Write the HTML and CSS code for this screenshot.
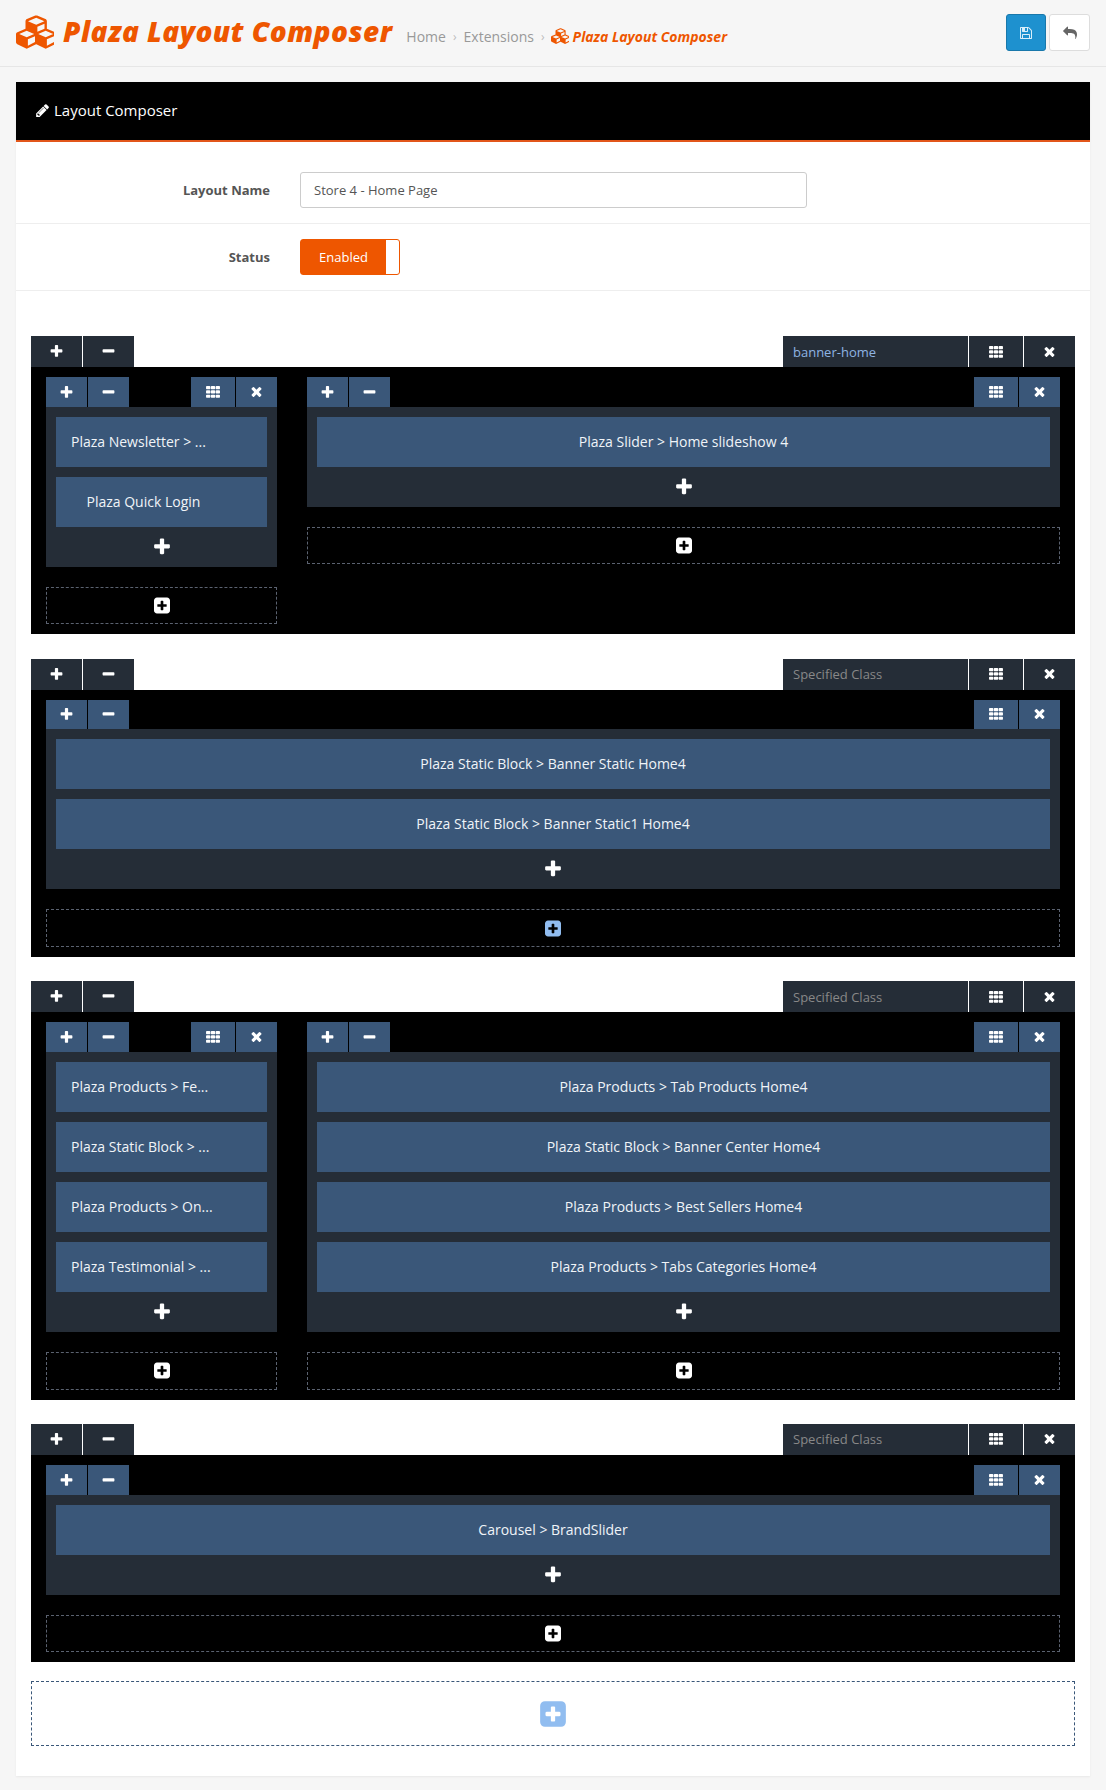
FILE: index.html
```html
<!DOCTYPE html>
<html lang="en">
<head>
<meta charset="utf-8">
<title>Plaza Layout Composer</title>
<link rel="stylesheet" href="styles.css">
</head>
<body>
<svg class="defs" width="0" height="0" aria-hidden="true">
  <symbol id="i-plus" viewBox="0 0 1408 1792"><path d="M1408 736v192q0 40-28 68t-68 28h-416v416q0 40-28 68t-68 28h-192q-40 0-68-28t-28-68v-416h-416q-40 0-68-28t-28-68v-192q0-40 28-68t68-28h416v-416q0-40 28-68t68-28h192q40 0 68 28t28 68v416h416q40 0 68 28t28 68z"/></symbol>
  <symbol id="i-minus" viewBox="0 0 1408 1792"><path d="M1408 736v192q0 40-28 68t-68 28h-1216q-40 0-68-28t-28-68v-192q0-40 28-68t68-28h1216q40 0 68 28t28 68z"/></symbol>
  <symbol id="i-times" viewBox="0 0 1188 1792"><path d="M1188 1188q0 40-28 68l-136 136q-28 28-68 28t-68-28l-294-294-294 294q-28 28-68 28t-68-28l-136-136q-28-28-28-68t28-68l294-294-294-294q-28-28-28-68t28-68l136-136q28-28 68-28t68 28l294 294 294-294q28-28 68-28t68 28l136 136q28 28 28 68t-28 68l-294 294 294 294q28 28 28 68z"/></symbol>
  <symbol id="i-square" viewBox="0 0 1536 1792"><path d="M1216 960v-128q0-26-19-45t-45-19h-256v-256q0-26-19-45t-45-19h-128q-26 0-45 19t-19 45v256h-256q-26 0-45 19t-19 45v128q0 26 19 45t45 19h256v256q0 26 19 45t45 19h128q26 0 45-19t19-45v-256h256q26 0 45-19t19-45zm320-544v960q0 119-84.500 203.500t-203.500 84.500h-960q-119 0-203.500-84.500t-84.500-203.500v-960q0-119 84.500-203.500t203.500-84.500h960q119 0 203.500 84.500t84.500 203.500z"/></symbol>
  <symbol id="i-th" viewBox="0 0 1664 1792"><path d="M512 1248v192q0 40-28 68t-68 28h-320q-40 0-68-28t-28-68v-192q0-40 28-68t68-28h320q40 0 68 28t28 68zm0-512v192q0 40-28 68t-68 28h-320q-40 0-68-28t-28-68v-192q0-40 28-68t68-28h320q40 0 68 28t28 68zm576 512v192q0 40-28 68t-68 28h-320q-40 0-68-28t-28-68v-192q0-40 28-68t68-28h320q40 0 68 28t28 68zm-576-1024v192q0 40-28 68t-68 28h-320q-40 0-68-28t-28-68v-192q0-40 28-68t68-28h320q40 0 68 28t28 68zm576 512v192q0 40-28 68t-68 28h-320q-40 0-68-28t-28-68v-192q0-40 28-68t68-28h320q40 0 68 28t28 68zm576 512v192q0 40-28 68t-68 28h-320q-40 0-68-28t-28-68v-192q0-40 28-68t68-28h320q40 0 68 28t28 68zm-576-1024v192q0 40-28 68t-68 28h-320q-40 0-68-28t-28-68v-192q0-40 28-68t68-28h320q40 0 68 28t28 68zm576 512v192q0 40-28 68t-68 28h-320q-40 0-68-28t-28-68v-192q0-40 28-68t68-28h320q40 0 68 28t28 68zm0-512v192q0 40-28 68t-68 28h-320q-40 0-68-28t-28-68v-192q0-40 28-68t68-28h320q40 0 68 28t28 68z"/></symbol>
  <symbol id="i-save" viewBox="0 0 1536 1792"><path d="M384 1536h768v-384h-768v384zm896 0h128v-896q0-14-10-38.500t-20-34.500l-281-281q-10-10-34-20t-39-10v416q0 40-28 68t-68 28h-576q-40 0-68-28t-28-68v-416h-128v1280h128v-416q0-40 28-68t68-28h832q40 0 68 28t28 68v416zm-384-928v-320q0-13-9.500-22.500t-22.500-9.500h-192q-13 0-22.500 9.500t-9.500 22.500v320q0 13 9.500 22.500t22.500 9.500h192q13 0 22.500-9.500t9.500-22.500zm640 32v928q0 40-28 68t-68 28h-1344q-40 0-68-28t-28-68v-1344q0-40 28-68t68-28h928q40 0 88 20t76 48l280 280q28 28 48 76t20 88z"/></symbol>
  <symbol id="i-reply" viewBox="0 0 1792 1792"><path d="M1792 1120q0 166-127 451-3 7-10.500 24t-13.500 30-13 22q-12 17-28 17-15 0-23.500-10t-8.500-25q0-9 2.500-26.500t2.500-23.500q5-68 5-123 0-101-17.500-181t-48.500-138.500-80-101-105.500-69.500-133-42.500-154-21.500-175.500-6h-224v256q0 26-19 45t-45 19-45-19l-512-512q-19-19-19-45t19-45l512-512q19-19 45-19t45 19 19 45v256h224q713 0 875 403 53 134 53 333z"/></symbol>
  <symbol id="i-pencil" viewBox="0 0 1515 1792"><path d="M363 1536l91-91-235-235-91 91v107h128v128h107zm523-928q0-22-22-22-10 0-17 7l-542 542q-7 7-7 17 0 22 22 22 10 0 17-7l542-542q7-7 7-17zm-54-192l416 416-832 832h-416v-416zm683 96q0 53-37 90l-166 166-416-416 166-165q36-38 90-38 53 0 91 38l235 234q37 39 37 91z"/></symbol>
  <symbol id="i-cubes" viewBox="0 0 2048 1792"><path d="M640 1632l384-192v-314l-384 164v342zm-64-454l404-173-404-173-404 173zm1088 454l384-192v-314l-384 164v342zm-64-454l404-173-404-173-404 173zm-448-293l384-165v-266l-384 164v267zm-64-379l441-189-441-189-441 189zm1088 518v416q0 36-19 67t-52 47l-448 224q-25 14-57 14t-57-14l-448-224q-4-2-7-4-2 2-7 4l-448 224q-25 14-57 14t-57-14l-448-224q-33-16-52-47t-19-67v-416q0-38 21.500-70t56.500-48l434-186v-400q0-38 21.500-70t56.500-48l448-192q23-10 50-10t50 10l448 192q35 16 56.500 48t21.500 70v400l434 186q36 16 57 48t21 70z"/></symbol>
</svg>

<header class="top">
  <div class="brand">
    <svg class="brand-icon"><use href="#i-cubes"/></svg>
    <h1 class="brand-title">Plaza Layout Composer</h1>
    <nav class="crumbs">
      <a class="crumb">Home</a><span class="sep">›</span>
      <a class="crumb">Extensions</a><span class="sep">›</span>
      <svg class="crumb-icon"><use href="#i-cubes"/></svg>
      <a class="crumb-now">Plaza Layout Composer</a>
    </nav>
  </div>
  <div class="actions">
    <button class="btn btn-save"><svg class="btn-icon"><use href="#i-save"/></svg></button>
    <button class="btn btn-back"><svg class="btn-icon"><use href="#i-reply"/></svg></button>
  </div>
</header>

<main class="panel">
  <div class="panel-head"><svg class="pencil"><use href="#i-pencil"/></svg><span>Layout Composer</span></div>
  <div class="panel-body">
    <div class="form-row form-row-name">
      <label class="form-label">Layout Name</label>
      <div class="input">Store 4 - Home Page</div>
    </div>
    <div class="form-row form-row-status">
      <label class="form-label">Status</label>
      <div class="toggle"><span class="toggle-on">Enabled</span><span class="toggle-knob"></span></div>
    </div>

    <div class="composer">
      <section class="row">
        <div class="row-tabs">
          <div class="tab tab-add"><svg class="ic"><use href="#i-plus"/></svg></div>
          <div class="tab tab-add"><svg class="ic"><use href="#i-minus"/></svg></div>
          <div class="tab tab-class tab-class-set">banner-home</div>
          <div class="tab tab-grid"><svg class="ic"><use href="#i-th"/></svg></div>
          <div class="tab tab-x"><svg class="ic"><use href="#i-times"/></svg></div>
        </div>
        <div class="row-body row-split">
          <div class="col col-side">
            <div class="col-tabs">
              <div class="ctab"><svg class="ic"><use href="#i-plus"/></svg></div>
              <div class="ctab"><svg class="ic"><use href="#i-minus"/></svg></div>
              <div class="ctab ctab-grid"><svg class="ic"><use href="#i-th"/></svg></div>
              <div class="ctab ctab-x"><svg class="ic"><use href="#i-times"/></svg></div>
            </div>
            <div class="col-body">
              <div class="module module-left">Plaza Newsletter &gt; ...</div>
              <div class="module module-left module-indent">Plaza Quick Login</div>
              <div class="col-add"><svg class="ic-add"><use href="#i-plus"/></svg></div>
            </div>
            <div class="drop"><svg class="ic-drop"><use href="#i-square"/></svg></div>
          </div>
          <div class="col col-main">
            <div class="col-tabs">
              <div class="ctab"><svg class="ic"><use href="#i-plus"/></svg></div>
              <div class="ctab"><svg class="ic"><use href="#i-minus"/></svg></div>
              <div class="ctab ctab-grid"><svg class="ic"><use href="#i-th"/></svg></div>
              <div class="ctab ctab-x"><svg class="ic"><use href="#i-times"/></svg></div>
            </div>
            <div class="col-body">
              <div class="module">Plaza Slider &gt; Home slideshow 4</div>
              <div class="col-add"><svg class="ic-add"><use href="#i-plus"/></svg></div>
            </div>
            <div class="drop"><svg class="ic-drop"><use href="#i-square"/></svg></div>
          </div>
        </div>
      </section>

      <section class="row">
        <div class="row-tabs">
          <div class="tab tab-add"><svg class="ic"><use href="#i-plus"/></svg></div>
          <div class="tab tab-add"><svg class="ic"><use href="#i-minus"/></svg></div>
          <div class="tab tab-class">Specified Class</div>
          <div class="tab tab-grid"><svg class="ic"><use href="#i-th"/></svg></div>
          <div class="tab tab-x"><svg class="ic"><use href="#i-times"/></svg></div>
        </div>
        <div class="row-body">
          <div class="col">
            <div class="col-tabs">
              <div class="ctab"><svg class="ic"><use href="#i-plus"/></svg></div>
              <div class="ctab"><svg class="ic"><use href="#i-minus"/></svg></div>
              <div class="ctab ctab-grid"><svg class="ic"><use href="#i-th"/></svg></div>
              <div class="ctab ctab-x"><svg class="ic"><use href="#i-times"/></svg></div>
            </div>
            <div class="col-body">
              <div class="module">Plaza Static Block &gt; Banner Static Home4</div>
              <div class="module">Plaza Static Block &gt; Banner Static1 Home4</div>
              <div class="col-add"><svg class="ic-add"><use href="#i-plus"/></svg></div>
            </div>
            <div class="drop"><svg class="ic-drop ic-drop-blue"><use href="#i-square"/></svg></div>
          </div>
        </div>
      </section>

      <section class="row">
        <div class="row-tabs">
          <div class="tab tab-add"><svg class="ic"><use href="#i-plus"/></svg></div>
          <div class="tab tab-add"><svg class="ic"><use href="#i-minus"/></svg></div>
          <div class="tab tab-class">Specified Class</div>
          <div class="tab tab-grid"><svg class="ic"><use href="#i-th"/></svg></div>
          <div class="tab tab-x"><svg class="ic"><use href="#i-times"/></svg></div>
        </div>
        <div class="row-body row-split">
          <div class="col col-side">
            <div class="col-tabs">
              <div class="ctab"><svg class="ic"><use href="#i-plus"/></svg></div>
              <div class="ctab"><svg class="ic"><use href="#i-minus"/></svg></div>
              <div class="ctab ctab-grid"><svg class="ic"><use href="#i-th"/></svg></div>
              <div class="ctab ctab-x"><svg class="ic"><use href="#i-times"/></svg></div>
            </div>
            <div class="col-body">
              <div class="module module-left">Plaza Products &gt; Fe...</div>
              <div class="module module-left">Plaza Static Block &gt; ...</div>
              <div class="module module-left">Plaza Products &gt; On...</div>
              <div class="module module-left">Plaza Testimonial &gt; ...</div>
              <div class="col-add"><svg class="ic-add"><use href="#i-plus"/></svg></div>
            </div>
            <div class="drop"><svg class="ic-drop"><use href="#i-square"/></svg></div>
          </div>
          <div class="col col-main">
            <div class="col-tabs">
              <div class="ctab"><svg class="ic"><use href="#i-plus"/></svg></div>
              <div class="ctab"><svg class="ic"><use href="#i-minus"/></svg></div>
              <div class="ctab ctab-grid"><svg class="ic"><use href="#i-th"/></svg></div>
              <div class="ctab ctab-x"><svg class="ic"><use href="#i-times"/></svg></div>
            </div>
            <div class="col-body">
              <div class="module">Plaza Products &gt; Tab Products Home4</div>
              <div class="module">Plaza Static Block &gt; Banner Center Home4</div>
              <div class="module">Plaza Products &gt; Best Sellers Home4</div>
              <div class="module">Plaza Products &gt; Tabs Categories Home4</div>
              <div class="col-add"><svg class="ic-add"><use href="#i-plus"/></svg></div>
            </div>
            <div class="drop"><svg class="ic-drop"><use href="#i-square"/></svg></div>
          </div>
        </div>
      </section>

      <section class="row">
        <div class="row-tabs">
          <div class="tab tab-add"><svg class="ic"><use href="#i-plus"/></svg></div>
          <div class="tab tab-add"><svg class="ic"><use href="#i-minus"/></svg></div>
          <div class="tab tab-class">Specified Class</div>
          <div class="tab tab-grid"><svg class="ic"><use href="#i-th"/></svg></div>
          <div class="tab tab-x"><svg class="ic"><use href="#i-times"/></svg></div>
        </div>
        <div class="row-body">
          <div class="col">
            <div class="col-tabs">
              <div class="ctab"><svg class="ic"><use href="#i-plus"/></svg></div>
              <div class="ctab"><svg class="ic"><use href="#i-minus"/></svg></div>
              <div class="ctab ctab-grid"><svg class="ic"><use href="#i-th"/></svg></div>
              <div class="ctab ctab-x"><svg class="ic"><use href="#i-times"/></svg></div>
            </div>
            <div class="col-body">
              <div class="module">Carousel &gt; BrandSlider</div>
              <div class="col-add"><svg class="ic-add"><use href="#i-plus"/></svg></div>
            </div>
            <div class="drop"><svg class="ic-drop"><use href="#i-square"/></svg></div>
          </div>
        </div>
      </section>

      <div class="new-row"><svg class="ic-new"><use href="#i-square"/></svg></div>
    </div>
  </div>
</main>
</body>
</html>
```

FILE: styles.css
```css
* { box-sizing: border-box; }
html, body { margin: 0; padding: 0; }
body {
  background: #f6f6f6;
  font-family: "Open Sans", "Liberation Sans", sans-serif;
  font-size: 14px;
  color: #666;
  min-height: 1790px;
}
.defs { position: absolute; }
svg { fill: currentColor; display: block; }

/* Header */
.top {
  height: 67px;
  border-bottom: 1px solid #e6e6e6;
  padding: 14px 16px 0;
  display: flex;
  justify-content: space-between;
}
.brand { display: flex; align-items: center; height: 37px; color: #ee5600; }
.brand-icon { width: 38px; height: 34px; margin: 0 9px 2px 0; }
.brand-title {
  margin: 0 0 3px;
  font-size: 28px;
  font-weight: 800;
  font-style: italic;
  letter-spacing: 0.45px;
  line-height: 37px;
  color: #ee5600;
  white-space: nowrap;
}
.crumbs { display: flex; align-items: center; margin: 7px 0 0 14px; font-size: 14px; white-space: nowrap; }
.crumb { color: #999; }
.sep { color: #bbb; margin: 0 7px; font-size: 12px; }
.crumb-icon { width: 18px; height: 16px; color: #ee5600; margin: 0 4px 0 -1px; }
.crumb-now { color: #ee5600; font-weight: 700; font-style: italic; font-size: 14px; }
.actions { display: flex; gap: 3px; }
.btn { width: 41px; height: 37px; border-radius: 3px; padding: 0; display: flex; align-items: center; justify-content: center; }
.btn-save { width: 40px; background: #1e91cf; border: 1px solid #1978ab; color: #d9eef9; }
.btn-back { background: #fff; border: 1px solid #ddd; color: #666; }
.btn-icon { width: 12px; height: 14px; }
.btn-back .btn-icon { width: 14px; height: 14px; }

/* Panel */
.panel {
  margin: 15px 16px 0;
  background: #fff;
  box-shadow: 0 1px 2px rgba(0, 0, 0, 0.06);
  height: 1694px;
}
.panel-head {
  height: 60px;
  background: #000;
  border-bottom: 2px solid #e2561a;
  color: #fff;
  font-size: 15px;
  display: flex;
  align-items: center;
  padding: 0 0 2px 20px;
}
.pencil { width: 13px; height: 15px; margin-right: 5px; }
.form-row { display: flex; align-items: center; border-bottom: 1px solid #eee; }
.form-row-name { height: 82px; padding-top: 14px; }
.form-row-status { height: 67px; }
.form-label {
  width: 254px;
  text-align: right;
  font-size: 13px;
  font-weight: 700;
  color: #555;
}
.input {
  margin-left: 30px;
  width: 507px;
  height: 36px;
  border: 1px solid #ccc;
  border-radius: 3px;
  padding: 0 13px;
  line-height: 34px;
  font-size: 13px;
  color: #555;
}
.toggle {
  margin-left: 30px;
  width: 100px;
  height: 36px;
  border: 1px solid #ee5600;
  border-radius: 3px;
  display: flex;
  background: #fff;
}
.toggle-on {
  width: 85px;
  background: #ee5600;
  color: #fff;
  font-size: 13px;
  line-height: 34px;
  text-align: center;
}
.toggle-knob { flex: 1; }

/* Composer */
.composer { padding: 45px 15px 0; display: flex; flex-direction: column; gap: 24.2px; }
.row-tabs { display: flex; height: 31px; }
.tab {
  background: #252d37;
  color: #fff;
  display: flex;
  align-items: center;
  justify-content: center;
}
.tab-add { width: 51px; margin-right: 1px; }
.tab-add + .tab-add { margin-right: 0; }
.tab-class {
  width: 185px;
  margin-left: auto;
  margin-right: 1px;
  justify-content: flex-start;
  padding-left: 10px;
  font-size: 13px;
  color: #888;
}
.tab-class-set { color: #8fb4e3; }
.tab-grid { width: 54px; margin-right: 1px; padding-top: 1px; }
.tab-x { width: 51px; padding-top: 1px; }
.ic { width: 13px; height: 15px; }
.tab-grid .ic, .ctab-grid .ic { width: 14px; }

.row-body { background: #000; padding: 10px 15px; }
.row-split { display: flex; gap: 30px; }
.col-side { width: 231px; }
.col-main { flex: 1; }
.col-tabs { display: flex; height: 29.8px; gap: 1px; }
.ctab {
  width: 41px;
  background: #3a5779;
  color: #fff;
  display: flex;
  align-items: center;
  justify-content: center;
  padding-top: 1px;
}
.ctab-grid { width: 44px; margin-left: auto; }
.ctab-x { width: 41px; }
.col-body { background: #252d37; padding: 10px 10px 0; }
.module {
  height: 50px;
  margin-bottom: 10px;
  background: #3a5779;
  color: #f0f4f8;
  font-size: 14px;
  line-height: 50px;
  text-align: center;
  white-space: nowrap;
}
.module-left { text-align: left; padding-left: 15px; }
.module-indent { padding-left: 30.5px; }
.col-add { height: 40px; margin-top: -10px; display: flex; justify-content: center; align-items: center; color: #fff; }
.ic-add { width: 16px; height: 20px; }
.drop {
  margin-top: 20px;
  height: 37.6px;
  border: 1px dashed #5b6270;
  display: flex;
  align-items: center;
  justify-content: center;
  color: #fff;
}
.ic-drop { width: 16px; height: 19px; }
.ic-drop-blue { color: #91bdf0; }
.new-row {
  margin-top: -5.4px;
  height: 65px;
  padding-top: 2px;
  border: 1px dashed #3a5779;
  display: flex;
  align-items: center;
  justify-content: center;
  color: #91bdf0;
}
.ic-new { width: 26px; height: 30px; }
```
